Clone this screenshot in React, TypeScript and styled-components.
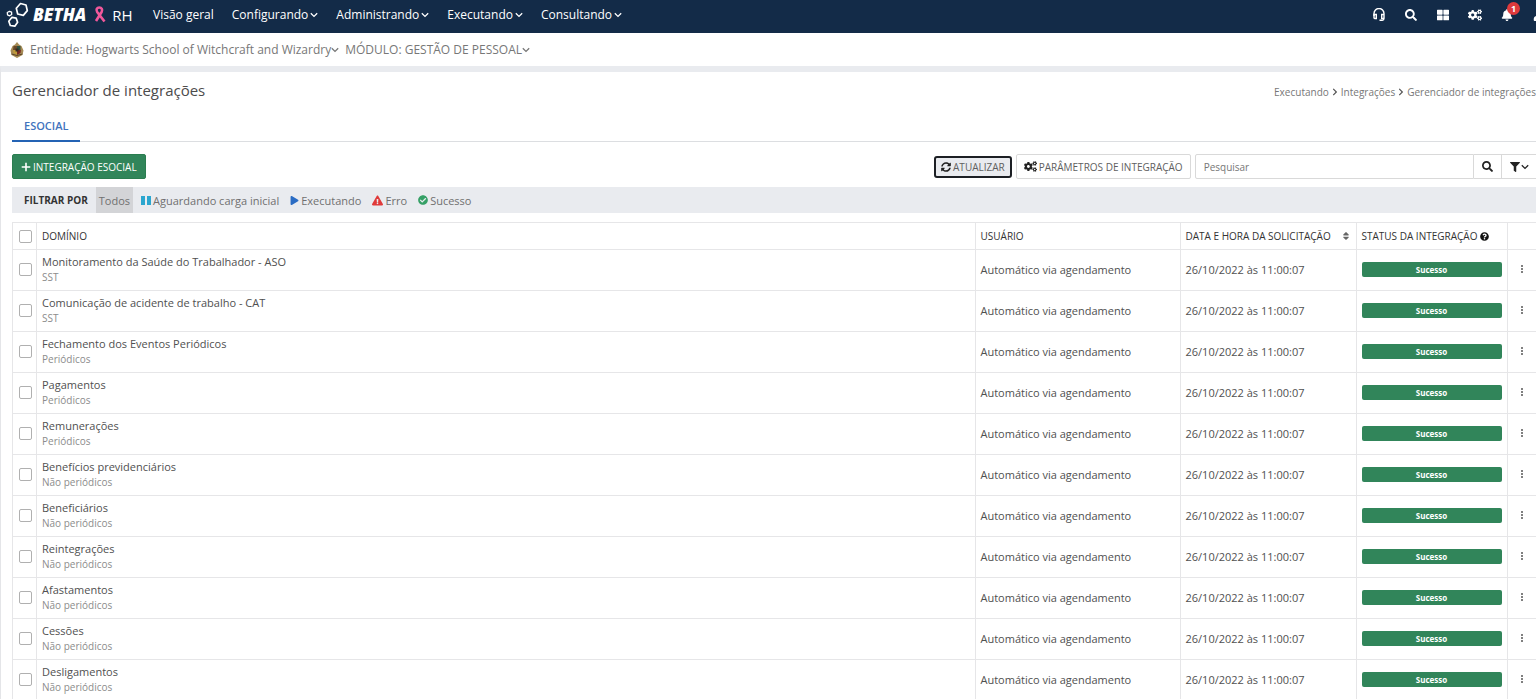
import React from 'react';
import styled, { createGlobalStyle, css } from 'styled-components';
import {
  FaBell, FaCheckCircle, FaChevronRight, FaCogs, FaExclamationTriangle, FaFilter,
  FaPlay, FaQuestionCircle, FaSearch, FaSort, FaSyncAlt, FaThLarge, FaUser,
} from 'react-icons/fa';

const Global = createGlobalStyle`
  * { box-sizing: border-box; }
  body {
    margin: 0;
    background: #fff;
    color: #505050;
    font-family: "Open Sans", "Noto Sans", sans-serif;
    font-size: 11px;
    overflow: hidden;
  }
  button, input { font: inherit; color: inherit; }
  a { color: inherit; text-decoration: none; }
`;

const TopBar = styled.header`
  display: flex;
  align-items: center;
  height: 33px;
  padding: 0 0 4px 6px;
  background: #132b48;
  color: #fff;
  overflow: hidden;
`;

const Brand = styled.a`
  display: flex;
  align-items: center;
  width: 147px;
  height: 28px;
`;

const BrandName = styled.span`
  margin-left: 4px;
  font-size: 17px;
  font-weight: 800;
  font-style: italic;
  line-height: 28px;
`;

const BrandProduct = styled.span`
  font-size: 15px;
  line-height: 26px;
`;

const Ribbon = styled.svg`
  margin: 0 6px 0 8px;
`;

const Menu = styled.nav`
  display: flex;
  flex: 1;
  gap: 18px;
`;

const MenuLink = styled.a`
  display: flex;
  align-items: center;
  gap: 2px;
  font-size: 12px;
  line-height: 28px;
  font-weight: 500;
`;

const Tools = styled.div`
  display: flex;
  flex: none;
  align-items: center;
  gap: 8px;
  margin-right: -15px;
`;

const ToolButton = styled.button`
  position: relative;
  display: grid;
  place-items: center;
  width: 24px;
  height: 28px;
  padding: 0;
  border: 0;
  background: none;
  font-size: 12px;
`;

const Badge = styled.span`
  position: absolute;
  top: 1px;
  right: -1px;
  width: 13px;
  height: 13px;
  border-radius: 50%;
  background: #df3a3c;
  font-size: 9px;
  font-weight: 700;
  line-height: 13px;
  text-align: center;
`;

const ContextBar = styled.div`
  display: flex;
  align-items: center;
  height: 33px;
  padding-left: 10px;
  color: #777;
  font-size: 12px;
`;

const ContextLink = styled.a`
  display: flex;
  align-items: center;
  margin-left: 6px;
`;

const Page = styled.main`
  border-top: 6px solid #e9ebef;
  border-left: 1px solid #e4e5e8;
  padding-left: 11px;
`;

const PageHeader = styled.div`
  display: flex;
  align-items: center;
  justify-content: space-between;
  height: 36px;
`;

const Title = styled.h1`
  margin: 0;
  color: #4c4c4c;
  font-size: 15px;
  font-weight: 400;
`;

const Breadcrumb = styled.nav`
  display: flex;
  align-items: center;
  gap: 2px;
  padding-top: 4px;
  color: #777;
  font-size: 10px;
  svg { font-size: 8px; color: #555; }
`;

const Tabs = styled.div`
  display: flex;
  height: 34px;
  border-bottom: 1px solid #dcdee1;
`;

const Tab = styled.button`
  height: 34px;
  padding: 2px 12px 0;
  border: 0;
  border-bottom: 2px solid #2463b4;
  background: none;
  color: #3f73bd;
  font-size: 11px;
  font-weight: 600;
`;

const Toolbar = styled.div`
  display: flex;
  align-items: center;
  gap: 4px;
  padding-top: 12px;
`;

const Button = styled.button<{ $kind?: 'primary' | 'focused' }>`
  display: flex;
  align-items: center;
  justify-content: center;
  gap: 2px;
  height: 25px;
  padding: 0 7px;
  border: 1px solid #d9d9d9;
  border-radius: 2px;
  background: #fff;
  color: #606060;
  font-size: 10px;
  white-space: nowrap;
  svg { color: #222; }
  ${p => p.$kind === 'primary' && css`
    margin-right: auto;
    padding: 0 8px;
    border-color: #2b7d50;
    background: #31855a;
    color: #fff;
    svg { color: #fff; }
  `}
  ${p => p.$kind === 'focused' && css`
    height: 22px;
    padding: 0 5px;
    border: 2px solid #1c1f24;
    border-radius: 3px;
    background: #e9ebef;
  `}
`;

const SearchGroup = styled.div`
  display: flex;
  width: 22.4%;
  height: 25px;
`;

const SearchInput = styled.input`
  flex: 1;
  min-width: 0;
  padding: 0 8px;
  border: 1px solid #d9d9d9;
  border-radius: 2px 0 0 2px;
  font-size: 10px;
  &::placeholder { color: #777; }
`;

const SearchButton = styled.button<{ $wide?: boolean }>`
  display: flex;
  align-items: center;
  justify-content: center;
  gap: 1px;
  width: ${p => (p.$wide ? 34 : 28)}px;
  padding: 0;
  border: 1px solid #d9d9d9;
  border-width: 1px 1px 1px 0;
  ${p => p.$wide && css`border-right: 0;`}
  background: #fff;
  color: #222;
  font-size: 11px;
`;

const FilterBar = styled.div`
  display: flex;
  align-items: center;
  height: 26px;
  margin-top: 8px;
  background: #e9ebef;
`;

const FilterLabel = styled.span`
  padding: 0 8px 0 12px;
  color: #333;
  font-size: 10px;
  font-weight: 700;
`;

const FilterButton = styled.button<{ $active?: boolean }>`
  display: flex;
  align-items: center;
  gap: 2px;
  height: 26px;
  padding: 0 3px;
  margin-right: 5px;
  border: 0;
  background: ${p => (p.$active ? '#d3d4d7' : 'none')};
  color: #707070;
  font-size: 11px;
`;

const Table = styled.table`
  width: 100%;
  margin-top: 9px;
  border-collapse: collapse;
  table-layout: fixed;
`;

const HeadCell = styled.th<{ $w?: string }>`
  width: ${p => p.$w ?? 'auto'};
  height: 27px;
  padding: 0 5px;
  border: 1px solid #e6e6e8;
  border-right-width: 0;
  color: #333;
  font-size: 10px;
  font-weight: 500;
  text-align: left;
  white-space: nowrap;
`;

const HeadContent = styled.div`
  display: flex;
  align-items: center;
  gap: 3px;
`;

const SortIcon = styled(FaSort)`
  margin-left: auto;
  color: #666;
  font-size: 10px;
`;

const Cell = styled.td<{ $center?: boolean }>`
  height: 41px;
  padding: 0 5px 2px;
  border: 1px solid #e6e6e8;
  border-right-width: 0;
  line-height: 15px;
  text-align: ${p => (p.$center ? 'center' : 'left')};
`;

const Check = styled.input`
  appearance: none;
  display: block;
  width: 13px;
  height: 13px;
  margin: 0 0 0 1px;
  border: 1px solid #b0b0b0;
  border-radius: 2px;
  background: #fff;
`;

const Group = styled.div`
  color: #8c8c8c;
  font-size: 10px;
  line-height: 16px;
`;

const Status = styled.div`
  height: 15px;
  border-radius: 2px;
  background: #31855a;
  color: #fff;
  font-size: 8px;
  font-weight: 700;
  line-height: 15px;
  text-align: center;
`;

const RowMenu = styled.button`
  display: grid;
  place-items: center;
  width: 18px;
  height: 20px;
  padding: 0;
  border: 0;
  background: none;
`;

const Chevron = () => (
  <svg width="8" height="6" viewBox="0 0 8 6" fill="none" stroke="currentColor" strokeWidth="1.3" aria-hidden>
    <path d="M0.8 1.2 4 4.400 7.2 1.2" />
  </svg>
);

const Plus = () => (
  <svg width="10" height="10" viewBox="0 0 10 10" fill="none" stroke="currentColor" strokeWidth="1.600" aria-hidden>
    <path d="M5 .7v8.600M.7 5h8.600" />
  </svg>
);

const Headset = () => (
  <svg width="12" height="13" viewBox="0 0 12 13" fill="none" stroke="currentColor" strokeWidth="1.400" aria-hidden>
    <path d="M1 8V5.500a5 5 0 0 1 10 0V10.500q0 1.700-1.700 1.700H6.500" />
    <path d="M1 6.500h2.300v4H1.700Q1 10.500 1 9.800zM11 6.500H8.700v4H11" />
  </svg>
);

const BethaMark = () => (
  <svg width="23" height="26" viewBox="0 0 23 26" fill="none" stroke="#fff" strokeWidth="1.700" strokeLinejoin="round" aria-hidden>
    <path d="M14.500 1.500 20 3 21.300 8.600 17.300 13.400 11.700 12 10.300 6.300z" />
    <path d="M6 15.300 10.200 16.200 11.600 20.200 8.800 24.200 4.300 23.500 2.800 19.300z" />
    <path d="M3.500 9.300 5.600 10.200 5.700 12.500 3.600 13.800 1.500 12.800 1.300 10.500z" strokeWidth="1.3" />
  </svg>
);

const Crest = () => (
  <svg width="14" height="16" viewBox="0 0 14 16" aria-hidden>
    <path d="M7 0 9 2.500 11.500 4 13.500 8.500 12.500 13 7 16 1.500 13 .5 8.500 2.500 4 5 2.500z" fill="#a58a55" />
    <path d="M3.500 4h3.500v4H3z" fill="#6b4a2a" />
    <path d="M7 4h3.500v4H7z" fill="#2d5140" />
    <path d="M3 8h4v5L3.500 11z" fill="#c09a3a" />
    <path d="M7 8h4l-.5 3L7 13z" fill="#7a2a23" />
    <path d="M5.500 6.500h3v3h-3z" fill="#332a22" />
    <path d="M1.500 12q5.500 3 11 0" stroke="#5b4526" fill="none" />
  </svg>
);

const MENUS = ['Configurando', 'Administrando', 'Executando', 'Consultando'];

const ROWS = [
  ['Monitoramento da Saúde do Trabalhador - ASO', 'SST'],
  ['Comunicação de acidente de trabalho - CAT', 'SST'],
  ['Fechamento dos Eventos Periódicos', 'Periódicos'],
  ['Pagamentos', 'Periódicos'],
  ['Remunerações', 'Periódicos'],
  ['Benefícios previdenciários', 'Não periódicos'],
  ['Beneficiários', 'Não periódicos'],
  ['Reintegrações', 'Não periódicos'],
  ['Afastamentos', 'Não periódicos'],
  ['Cessões', 'Não periódicos'],
  ['Desligamentos', 'Não periódicos'],
];

export default function App() {
  return (
    <>
      <Global />
      <TopBar>
        <Brand href="#">
          <BethaMark />
          <BrandName>BETHA</BrandName>
          <Ribbon width="12" height="17" viewBox="0 0 12 17" fill="none" stroke="#f0589b" strokeWidth="2.600" aria-hidden>
            <path d="M10.500 15.500 3.200 6C1.600 3.500 3 1.500 5.300 1.500S9 3.500 7.600 6L2 15" />
          </Ribbon>
          <BrandProduct>RH</BrandProduct>
        </Brand>
        <Menu>
          <MenuLink href="#">Visão geral</MenuLink>
          {MENUS.map(m => <MenuLink href="#" key={m}>{m} <Chevron /></MenuLink>)}
        </Menu>
        <Tools>
          <ToolButton aria-label="Suporte"><Headset /></ToolButton>
          <ToolButton aria-label="Pesquisar"><FaSearch /></ToolButton>
          <ToolButton aria-label="Aplicativos"><FaThLarge /></ToolButton>
          <ToolButton aria-label="Configurações"><FaCogs size={14} /></ToolButton>
          <ToolButton aria-label="Notificações"><FaBell /><Badge>1</Badge></ToolButton>
          <ToolButton aria-label="Perfil"><FaUser /></ToolButton>
        </Tools>
      </TopBar>
      <ContextBar>
        <Crest />
        <ContextLink href="#">Entidade: Hogwarts School of Witchcraft and Wizardry<Chevron /></ContextLink>
        <ContextLink href="#">MÓDULO: GESTÃO DE PESSOAL<Chevron /></ContextLink>
      </ContextBar>
      <Page>
        <PageHeader>
          <Title>Gerenciador de integrações</Title>
          <Breadcrumb>
            <a href="#">Executando</a><FaChevronRight /><a href="#">Integrações</a><FaChevronRight />
            <span>Gerenciador de integrações</span>
          </Breadcrumb>
        </PageHeader>
        <Tabs><Tab>ESOCIAL</Tab></Tabs>
        <Toolbar>
          <Button $kind="primary"><Plus />INTEGRAÇÃO ESOCIAL</Button>
          <Button $kind="focused"><FaSyncAlt size={10} />ATUALIZAR</Button>
          <Button><FaCogs size={13} />PARÂMETROS DE INTEGRAÇÃO</Button>
          <SearchGroup>
            <SearchInput placeholder="Pesquisar" aria-label="Pesquisar" />
            <SearchButton aria-label="Buscar"><FaSearch /></SearchButton>
            <SearchButton $wide aria-label="Filtros"><FaFilter size={10} /><Chevron /></SearchButton>
          </SearchGroup>
        </Toolbar>
        <FilterBar>
          <FilterLabel>FILTRAR POR</FilterLabel>
          <FilterButton $active>Todos</FilterButton>
          <FilterButton>
            <svg width="10" height="9" fill="#2ba6cf" aria-hidden><path d="M0 0h4v9H0zM6 0h4v9H6z" /></svg>
            Aguardando carga inicial
          </FilterButton>
          <FilterButton><FaPlay size={9} color="#2a6cc4" />Executando</FilterButton>
          <FilterButton><FaExclamationTriangle size={11} color="#e03a3a" />Erro</FilterButton>
          <FilterButton><FaCheckCircle size={10} color="#35a066" />Sucesso</FilterButton>
        </FilterBar>
        <Table>
          <thead>
            <tr>
              <HeadCell $w="24px"><Check type="checkbox" aria-label="Selecionar todos" /></HeadCell>
              <HeadCell>DOMÍNIO</HeadCell>
              <HeadCell $w="205px">USUÁRIO</HeadCell>
              <HeadCell $w="176px"><HeadContent>DATA E HORA DA SOLICITAÇÃO<SortIcon /></HeadContent></HeadCell>
              <HeadCell $w="151px"><HeadContent>STATUS DA INTEGRAÇÃO<FaQuestionCircle size={9} color="#111" /></HeadContent></HeadCell>
              <HeadCell $w="29px" aria-label="Ações" />
            </tr>
          </thead>
          <tbody>
            {ROWS.map(([name, group]) => (
              <tr key={name}>
                <Cell><Check type="checkbox" aria-label={name} /></Cell>
                <Cell>{name}<Group>{group}</Group></Cell>
                <Cell>Automático via agendamento</Cell>
                <Cell>26/10/2022 às 11:00:07</Cell>
                <Cell><Status>Sucesso</Status></Cell>
                <Cell $center>
                  <RowMenu aria-label="Opções">
                    <svg width="2" height="8" fill="#808080" aria-hidden><path d="M0 0h2v2H0zM0 3h2v2H0zM0 6h2v2H0z" /></svg>
                  </RowMenu>
                </Cell>
              </tr>
            ))}
          </tbody>
        </Table>
      </Page>
    </>
  );
}
